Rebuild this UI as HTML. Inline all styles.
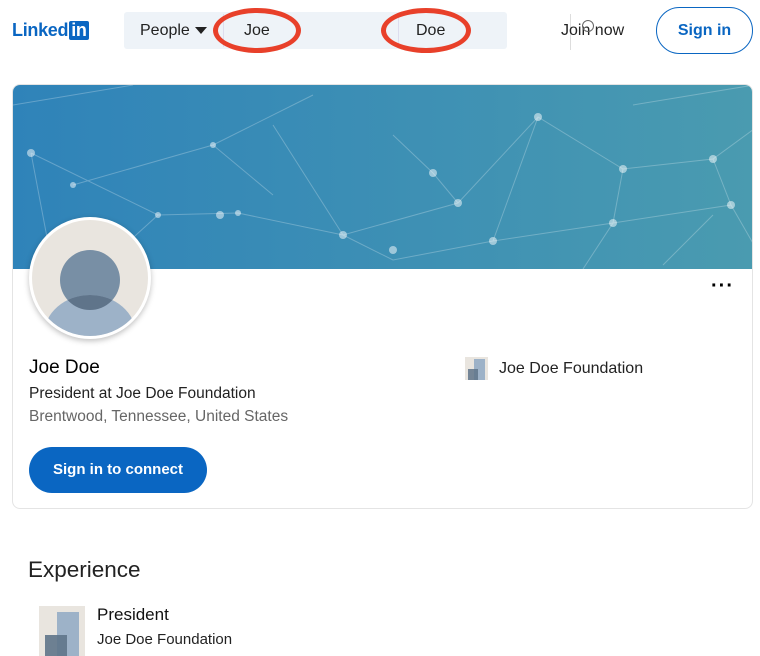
<!DOCTYPE html>
<html><head><meta charset="utf-8"><style>
*{margin:0;padding:0;box-sizing:border-box}
body{width:760px;height:650px;overflow:hidden;background:#fff;font-family:"Liberation Sans",sans-serif;color:#000;position:relative}
.a{position:absolute}
</style></head><body>
<div class="a" style="left:12px;top:20px;font-weight:bold;font-size:18px;color:#0a66c2;letter-spacing:-0.3px">Linked<span style="display:inline-block;background:#0a66c2;color:#fff;border-radius:2px;padding:0 2px;margin-left:1px;line-height:19px">in</span></div>
<div class="a" style="left:124px;top:12px;width:383px;height:37px;background:#eef3f8;border-radius:3px"></div>
<div class="a" style="left:140px;top:22px;font-size:16px;color:#222">People</div>
<div class="a" style="left:195px;top:27px;width:0;height:0;border-left:6px solid transparent;border-right:6px solid transparent;border-top:7px solid #222"></div>
<div class="a" style="left:223px;top:14px;width:1px;height:33px;background:#dde"></div>
<div class="a" style="left:398px;top:14px;width:1px;height:33px;background:#dde"></div>
<div class="a" style="left:244px;top:22px;font-size:16px;color:#222">Joe</div>
<div class="a" style="left:416px;top:22px;font-size:16px;color:#222">Doe</div>
<div class="a" style="left:213px;top:8px;width:88px;height:45px;border:5px solid #e8402a;border-radius:50%"></div>
<div class="a" style="left:381px;top:8px;width:90px;height:45px;border:5px solid #e8402a;border-radius:50%"></div>
<div class="a" style="left:570px;top:14px;width:1px;height:36px;background:#ddd"></div>
<div class="a" style="left:561px;top:22px;font-size:16px;color:#222">Join now</div>
<div class="a" style="left:582px;top:20px;width:12px;height:12px;border:1.5px solid #666;border-radius:50%"></div>
<div class="a" style="left:656px;top:7px;width:97px;height:47px;border:1px solid #0a66c2;border-radius:24px;color:#0a66c2;font-size:16px;font-weight:bold;text-align:center;line-height:45px">Sign in</div>

<div class="a" style="left:12px;top:84px;width:741px;height:425px;border:1px solid #e4e4e4;border-radius:8px;overflow:hidden">
<svg width="741" height="184" style="display:block">
<defs><linearGradient id="g" x1="0" x2="1" y1="0" y2="0"><stop offset="0" stop-color="#2f83b9"/><stop offset="1" stop-color="#4a9bb0"/></linearGradient></defs>
<rect width="741" height="184" fill="url(#g)"/>
<g stroke="#ffffff" stroke-opacity="0.25" stroke-width="1" fill="none">
<path d="M18 68L145 130L225 128L330 150L445 118L525 32L610 84L700 74L741 44M330 150L380 175L480 156L600 138L718 120M145 130L90 180M445 118L420 88L380 50M525 32L480 156M610 84L600 138L570 184M700 74L718 120L741 160M18 68L40 184M260 40L330 150M0 20L120 0M60 100L200 60L300 10M200 60L260 110M620 20L741 0M650 180L700 130"/>
</g>
<g fill="#fff" fill-opacity="0.5">
<circle cx="18" cy="68" r="4"/><circle cx="145" cy="130" r="3"/><circle cx="225" cy="128" r="3"/><circle cx="330" cy="150" r="4"/><circle cx="445" cy="118" r="4"/><circle cx="525" cy="32" r="4"/><circle cx="610" cy="84" r="4"/><circle cx="700" cy="74" r="4"/><circle cx="718" cy="120" r="4"/><circle cx="480" cy="156" r="4"/><circle cx="600" cy="138" r="4"/><circle cx="420" cy="88" r="4"/><circle cx="380" cy="165" r="4"/><circle cx="207" cy="130" r="4"/><circle cx="200" cy="60" r="3"/><circle cx="60" cy="100" r="3"/>
</g></svg>
<div class="a" style="right:18px;top:190px;font-size:20px;font-weight:bold;letter-spacing:1px">···</div>
</div>
<div class="a" style="left:29px;top:217px;width:122px;height:122px;border-radius:50%;background:#e9e5df;border:3px solid #fff;box-shadow:0 2px 6px rgba(0,0,0,.25);overflow:hidden">
<div class="a" style="left:28px;top:30px;width:60px;height:60px;border-radius:50%;background:#788fa5"></div>
<div class="a" style="left:12px;top:75px;width:92px;height:80px;border-radius:50%;background:#9db2c8"></div>
<div class="a" style="left:28px;top:30px;width:60px;height:60px;border-radius:50%;overflow:hidden"><div style="position:absolute;left:-16px;top:45px;width:92px;height:80px;border-radius:50%;background:#5f748a"></div></div>
</div>
<div class="a" style="left:29px;top:357px;font-size:19px">Joe Doe</div>
<div class="a" style="left:29px;top:385px;font-size:15.5px;color:#222">President at Joe Doe Foundation</div>
<div class="a" style="left:29px;top:408px;font-size:15.5px;color:#666">Brentwood, Tennessee, United States</div>
<div class="a" style="left:29px;top:447px;width:178px;height:46px;background:#0a66c2;border-radius:23px;color:#fff;font-size:15px;font-weight:bold;text-align:center;line-height:46px">Sign in to connect</div>
<div class="a" style="left:465px;top:357px;width:23px;height:23px;background:#e9e5df">
<div class="a" style="left:9px;top:2px;width:11px;height:21px;background:#9db2c8"></div>
<div class="a" style="left:3px;top:12px;width:10px;height:11px;background:#5f748a;opacity:.85"></div></div>
<div class="a" style="left:499px;top:360px;font-size:16px;color:#222">Joe Doe Foundation</div>
<div class="a" style="left:28px;top:557px;font-size:22.5px;color:#222">Experience</div>
<div class="a" style="left:39px;top:606px;width:46px;height:50px;background:#e9e5df">
<div class="a" style="left:18px;top:6px;width:22px;height:44px;background:#9db2c8"></div>
<div class="a" style="left:6px;top:29px;width:22px;height:21px;background:#5f748a;opacity:.9"></div></div>
<div class="a" style="left:97px;top:605px;font-size:17px;color:#111">President</div>
<div class="a" style="left:97px;top:631px;font-size:15px;color:#222">Joe Doe Foundation</div>
</body></html>
